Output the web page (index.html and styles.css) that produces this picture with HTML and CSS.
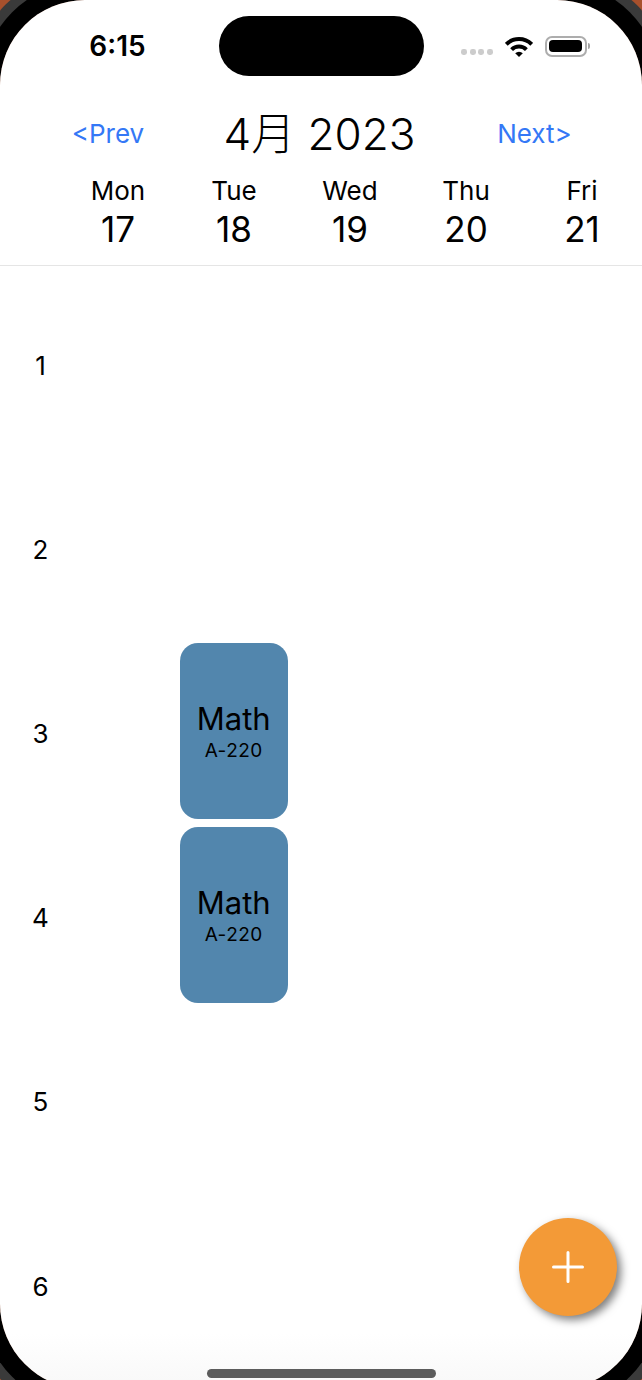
FILE: index.html
```html
<!DOCTYPE html>
<html lang="ja">
<head>
    <meta charset="UTF-8">
    <meta name="viewport" content="width=device-width, initial-scale=1.0">
    <title>Timetable</title>
    <link rel="stylesheet" href="styles.css">
</head>
<body>
    <div class="screen">
        <!-- status bar -->
        <div class="status-bar">
            <div class="clock">6:15</div>
            <div class="island"></div>
            <div class="status-icons">
                <div class="signal"><span></span><span></span><span></span><span></span></div>
                <svg class="wifi" width="28" height="21" viewBox="0 0 28 21">
                    <path d="M1.3 8.3A18 18 0 0 1 26.7 8.3" fill="none" stroke="#000" stroke-width="4"/>
                    <path d="M6.6 13.6A10.5 10.5 0 0 1 21.4 13.6" fill="none" stroke="#000" stroke-width="4"/>
                    <path d="M10.2 17.2A5.4 5.4 0 0 1 17.8 17.2L14 21Z" fill="#000"/>
                </svg>
                <div class="battery"><div class="battery-level"></div></div>
                <div class="battery-tip"></div>
            </div>
        </div>

        <!-- month header -->
        <div class="month-nav">
            <a class="nav-link">&lt;Prev</a>
            <div class="month-title">4月 2023</div>
            <a class="nav-link">Next&gt;</a>
        </div>

        <div class="week-row">
            <div class="day"><div class="day-name">Mon</div><div class="day-num">17</div></div>
            <div class="day"><div class="day-name">Tue</div><div class="day-num">18</div></div>
            <div class="day"><div class="day-name">Wed</div><div class="day-num">19</div></div>
            <div class="day"><div class="day-name">Thu</div><div class="day-num">20</div></div>
            <div class="day"><div class="day-name">Fri</div><div class="day-num">21</div></div>
        </div>

        <!-- timetable -->
        <div class="timetable">
            <div class="hour hour-1">1</div>
            <div class="hour hour-2">2</div>
            <div class="hour hour-3">3</div>
            <div class="hour hour-4">4</div>
            <div class="hour hour-5">5</div>
            <div class="hour hour-6">6</div>
            <div class="lesson hour-3">
                <div class="lesson-name">Math</div>
                <div class="lesson-room">A-220</div>
            </div>
            <div class="lesson hour-4">
                <div class="lesson-name">Math</div>
                <div class="lesson-room">A-220</div>
            </div>
        </div>

        <button class="add-button">
            <svg width="32" height="32" viewBox="0 0 32 32">
                <path d="M16 1.5V30.5M1.5 16H30.5" fill="none" stroke="#fff" stroke-width="3" stroke-linecap="round"/>
            </svg>
        </button>
        <div class="home-bar"></div>
    </div>
</body>
</html>
```

FILE: styles.css
```css
* {
    box-sizing: border-box;
}

html, body {
    height: 1380px;
}

body {
    margin: 0;
    overflow: hidden;
    background: #a8502c;
    color: #000;
    font-family: Inter, "Noto Sans CJK JP", sans-serif;
}

.screen {
    position: relative;
    width: 642px;
    height: 1389px;
    border-radius: 85px;
    background: linear-gradient(#fff 96%, #f8f8f8);
    box-shadow: 0 0 0 18px #000, 0 0 0 28px #3a3a3a;
}

/* status bar */
.status-bar {
    display: grid;
    grid-template-columns: 219px 205px 218px;
    align-items: center;
    height: 92px;
    padding-top: 16px;
    padding-bottom: 16px;
    margin-bottom: 5px;
}

.clock {
    padding-left: 16px;
    font-size: 28px;
    font-weight: 600;
    text-align: center;
}

.island {
    height: 60px;
    border-radius: 30px;
    background: #000;
}

.status-icons {
    display: flex;
    align-items: center;
    padding-left: 37px;
}

.signal {
    display: flex;
    gap: 2.5px;
    margin-top: 12px;
    margin-right: 12px;
}

.signal span {
    width: 6px;
    height: 6px;
    border-radius: 40%;
    background: #ccc;
}

.wifi {
    margin-right: 12px;
}

.battery {
    width: 42px;
    height: 21px;
    padding: 2.5px;
    border: 2px solid #adadad;
    border-radius: 7px;
}

.battery-level {
    height: 100%;
    border-radius: 4px;
    background: #000;
}

.battery-tip {
    width: 2px;
    height: 6px;
    margin-left: 1px;
    border-radius: 0 2px 2px 0;
    background: #a5a5a5;
}

/* month header */
.month-nav {
    display: grid;
    grid-template-columns: 216px 211px 215px;
    align-items: center;
    height: 70px;
    text-align: center;
}

.nav-link {
    padding-top: 2px;
    color: #3478f6;
    font-size: 26px;
}

.month-title {
    padding-right: 4px;
    padding-bottom: 2px;
    font-size: 44px;
    font-weight: 300;
    white-space: nowrap;
}

.week-row {
    display: grid;
    grid-template-columns: repeat(5, 116px);
    height: 99px;
    padding-top: 5px;
    padding-left: 60px;
    border-bottom: 1px solid #e5e5e5;
    text-align: center;
}

.day-name {
    height: 38px;
    font-size: 26px;
    line-height: 38px;
}

.day-num {
    height: 38px;
    font-size: 35px;
    line-height: 38px;
}

/* timetable */
.timetable {
    display: grid;
    grid-template-columns: 60px repeat(5, 116px);
    grid-template-rows: repeat(6, 184.2px);
    padding-top: 4.6px;
}

.hour {
    grid-column: 1;
    padding-left: 21px;
    font-size: 26px;
    line-height: 189px;
    text-align: center;
}

.hour-1 { grid-row: 1; }
.hour-2 { grid-row: 2; }
.hour-3 { grid-row: 3; }
.hour-4 { grid-row: 4; }
.hour-5 { grid-row: 5; }
.hour-6 { grid-row: 6; }

.lesson {
    display: flex;
    flex-direction: column;
    align-items: center;
    justify-content: center;
    grid-column: 3;
    margin: 4px 4.5px 4.4px 4px;
    padding-top: 2px;
    border-radius: 18px;
    background: #5286ad;
}

.lesson-name {
    font-size: 31px;
    line-height: 36px;
}

.lesson-room {
    margin-top: 2px;
    font-size: 19px;
    line-height: 24px;
    letter-spacing: 0.5px;
}

.add-button {
    position: absolute;
    right: 25px;
    bottom: 73px;
    display: flex;
    align-items: center;
    justify-content: center;
    width: 98px;
    height: 98px;
    padding: 0;
    border: none;
    border-radius: 50%;
    background: #f39a37;
    box-shadow: 4px 4px 9px rgba(0, 0, 0, 0.5);
}

.home-bar {
    position: absolute;
    left: 207px;
    bottom: 11px;
    width: 229px;
    height: 9px;
    border-radius: 5px;
    background: #5c5c5c;
}
```
